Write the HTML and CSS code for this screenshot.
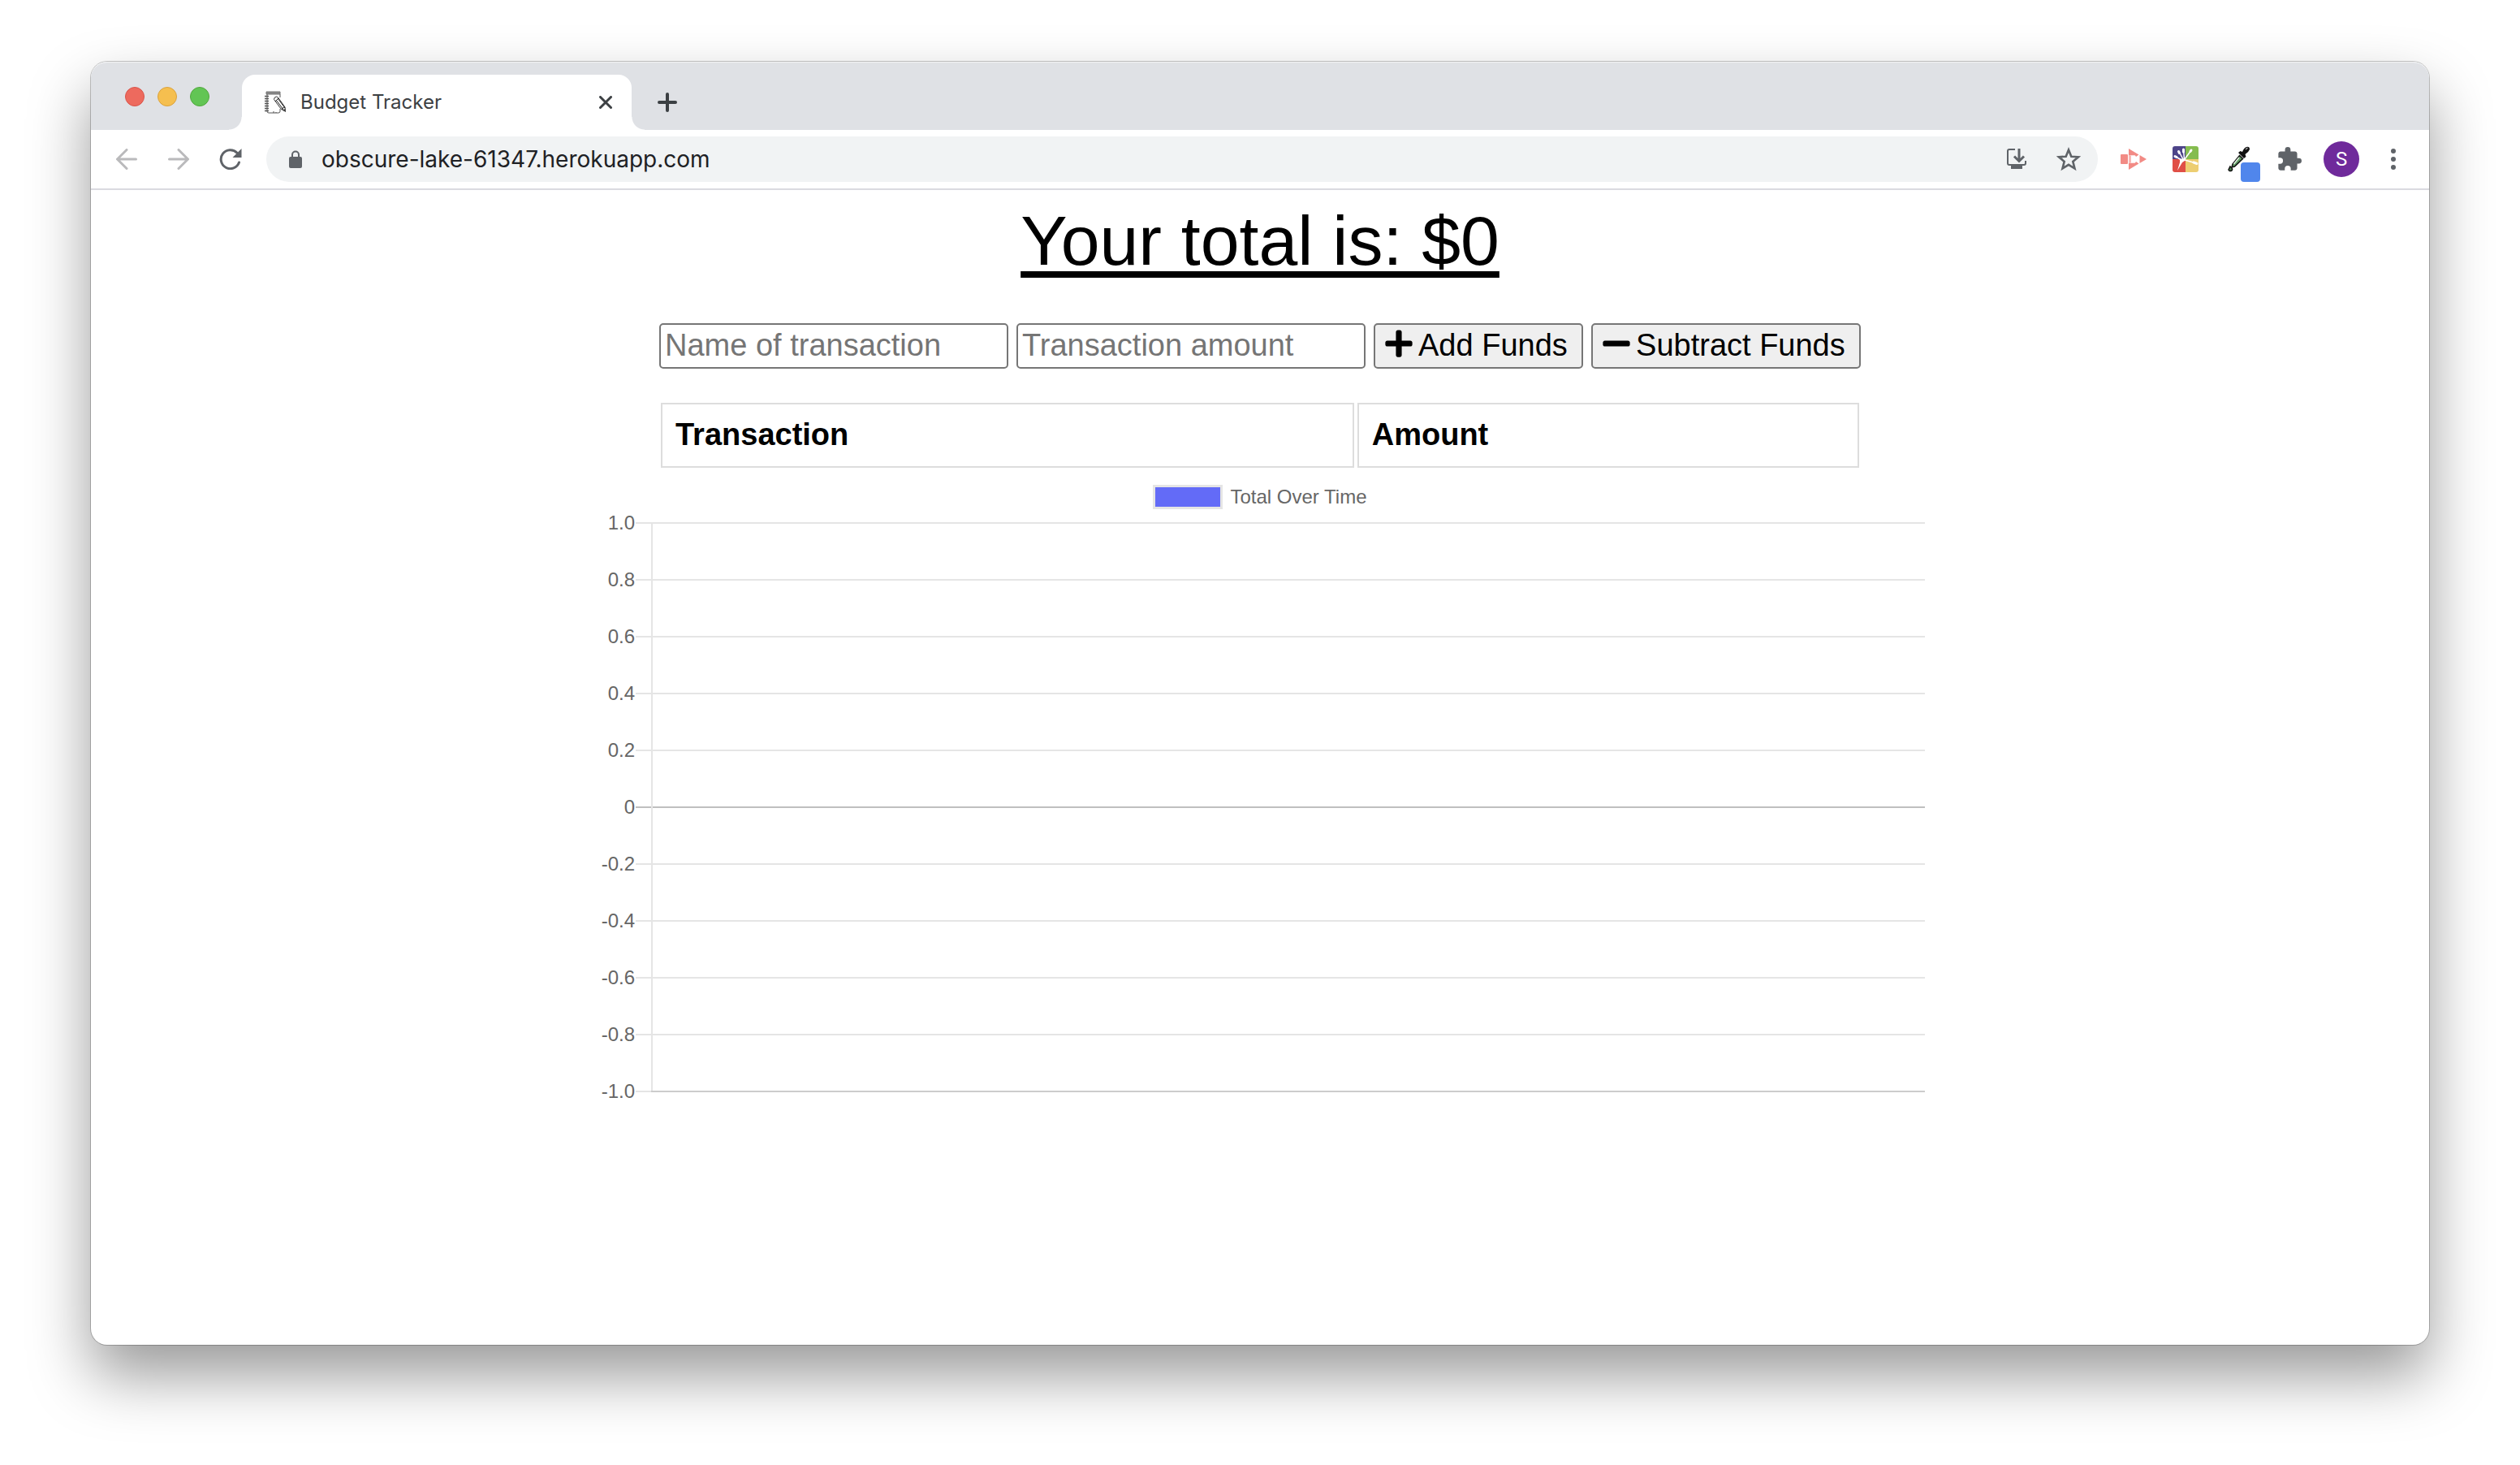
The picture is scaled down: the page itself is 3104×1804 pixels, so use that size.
FILE: index.html
```html
<!DOCTYPE html>
<html lang="en">
<head>
<meta charset="utf-8">
<title>Budget Tracker</title>
<link rel="stylesheet" href="styles.css">
</head>
<body>
<div class="window">
  <header class="tabstrip">
    <div class="lights">
      <span class="light light-close"></span>
      <span class="light light-min"></span>
      <span class="light light-max"></span>
    </div>
    <div class="tab">
      <svg class="favicon" width="26" height="28" viewBox="0 0 26 28" fill="none" stroke="#555" stroke-width="1">
        <path d="M2 1h17v3H2z" fill="#888" stroke="#777"/>
        <path d="M3 4v21q0 2 2 2h12q2 0 2-2v-3M19 4v4"/>
        <path d="M0 6.500h5M0 9.500h5M0 12.500h5M0 15.500h5M0 18.500h5M0 21.500h5M0 24.500h5" stroke-width="1.500"/>
        <path d="M11.500 10.500q0-3 3-3.500l2 1L25 20l.5 5-5-2.500z" fill="#fff" stroke="#333"/>
        <path d="M13 13l4-4M14 11l9 12M16 9l9 12M20.500 22.500l4-3" stroke="#222"/>
        <path d="M23 24l3 1.500-.5-3.500z" fill="#222"/>
        <path d="M11 27v-2M14 27v-1"/>
      </svg>
      <span class="tab-title">Budget Tracker</span>
      <button class="tab-close" type="button" aria-label="Close tab">
        <svg width="16" height="16" viewBox="0 0 16 16" stroke="#3c4043" stroke-width="3" stroke-linecap="round"><path d="M1.500 1.500l13 13M14.500 1.500l-13 13"/></svg>
      </button>
    </div>
    <button class="new-tab" type="button" aria-label="New tab">
      <svg width="24" height="24" viewBox="0 0 24 24" stroke="#3c4043" stroke-width="4" stroke-linecap="round"><path d="M12 2v20M2 12h20"/></svg>
    </button>
  </header>

  <nav class="toolbar">
    <button class="tool" type="button" aria-label="Back">
      <svg width="26" height="26" viewBox="0 0 26 26" fill="none" stroke="#bababc" stroke-width="3" stroke-linecap="round" stroke-linejoin="round"><path d="M24.500 13H2M13 1.500L1.500 13 13 24.500"/></svg>
    </button>
    <button class="tool" type="button" aria-label="Forward">
      <svg width="26" height="26" viewBox="0 0 26 26" fill="none" stroke="#bababc" stroke-width="3" stroke-linecap="round" stroke-linejoin="round"><path d="M1.500 13H24M13 1.500L24.500 13 13 24.500"/></svg>
    </button>
    <button class="tool" type="button" aria-label="Reload">
      <svg width="28" height="26" viewBox="0 0 28 26" fill="none" stroke="#5f6368" stroke-width="3"><path d="M24.500 17A11.500 11.500 0 1 1 22 5.200" stroke-linecap="round"/><path d="M27.500 0v11h-11z" fill="#5f6368" stroke="none"/></svg>
    </button>
    <div class="omnibox">
      <svg class="lock" width="16" height="22" viewBox="0 0 16 22"><rect x="0" y="8" width="16" height="14" rx="2" fill="#5f6368"/><path d="M4 9V5.500a4 4 0 0 1 8 0V9" fill="none" stroke="#5f6368" stroke-width="2"/></svg>
      <input class="url" type="text" aria-label="Address" value="obscure-lake-61347.herokuapp.com">
      <button class="tool" type="button" aria-label="Install app">
        <svg width="26" height="28" viewBox="0 0 26 28" fill="none" stroke="#5f6368" stroke-width="2"><path d="M11 2H4q-2 0-2 2v15q0 2 2 2h18q2 0 2-2v-3"/><path d="M6 22h14v4H6z" fill="#5f6368" stroke="none"/><path d="M16 1v15M10 10.500l6 6 6-6" stroke-width="3"/></svg>
      </button>
      <button class="tool" type="button" aria-label="Bookmark">
        <svg width="30" height="30" viewBox="0 0 30 30"><path d="M15 3.500l3.300 8.200 8.700.6-6.700 5.600 2.200 8.600L15 21.800l-7.500 4.700 2.200-8.600L3 12.300l8.700-.6z" fill="none" stroke="#5f6368" stroke-width="2.600"/></svg>
      </button>
    </div>
    <button class="tool" type="button" aria-label="Screen recorder">
      <svg width="32" height="26" viewBox="0 0 32 26" fill="#f28b85"><rect x="0" y="7" width="9" height="12" rx="1"/><path d="M10 0l12.500 7.500-3.500 2.500-1-1.500h-8z"/><path d="M10 26l12.500-7.500-3.500-2.500-1 1.500h-8z"/><path d="M10 7h1v12h-1z"/><path d="M32 13l-8.500-5v10z"/><path d="M10 8.500h7.500L19 11l-1.500 1v2l1.500 1-1.500 2.500H10z" fill="#fff"/><path d="M10 8.500h3v9h-3z" fill="#f28b85" opacity=".6"/></svg>
    </button>
    <button class="tool" type="button" aria-label="Colour burst">
      <svg width="32" height="32" viewBox="0 0 32 32"><path d="M16 0v16H0V3q0-3 3-3z" fill="#4d4489"/><path d="M16 0h13q3 0 3 3v13H16z" fill="#85bc4f"/><path d="M0 16h16v16H3q-3 0-3-3z" fill="#e04f46"/><path d="M16 16h16v13q0 3-3 3H16z" fill="#edce72"/><g stroke="#fff" stroke-linecap="round" fill="none" stroke-width="1.500"><path d="M14.500 16l-1-12M13 16L8 7M11 17l-7-4M15 16l8-11M15 17l14 4"/><path d="M13.500 4v3M22 6.500L23 5M26 20l4 1.500M7.500 6.500l1 2M3 12.500l2 1" stroke-width="3"/></g><path d="M9 15.500h7l-1 2.500-3 2-6 10 3-10z" fill="#fff"/></svg>
    </button>
    <button class="tool" type="button" aria-label="Colour picker">
      <svg class="dropper" width="40" height="44" viewBox="0 0 40 44"><path d="M14.500 11.500l4 4L8.500 25 5 26l1-4z" fill="#5f9a62" stroke="#111" stroke-width="1.500"/><path d="M14 14l-6.500 8" stroke="#dff0df" stroke-width="1.500"/><path d="M13 8l2.500-2 2.500 1q2-5 5-6 4-1 4 3-1 3-5.500 6l1 3-2.500 2z" fill="#111"/><path d="M22 4l2.500-2" stroke="#aaa" stroke-width="1.500"/><path d="M3 25q4 3 2 5-3 1.500-4-1z" fill="#4d8850" stroke="#111" stroke-width="1.500"/><rect x="16" y="20" width="24" height="24" rx="4" fill="#5086ec"/></svg>
    </button>
    <button class="tool" type="button" aria-label="Extensions">
      <svg width="30" height="30" viewBox="1 1 22 22" fill="#5f6368"><path d="M20.500 11H19V7c0-1.100-.9-2-2-2h-4V3.500a2.500 2.500 0 0 0-5 0V5H4c-1.100 0-2 .9-2 2v3.800h1.500a2.700 2.700 0 0 1 0 5.400H2V20c0 1.100.9 2 2 2h3.800v-1.500a2.700 2.700 0 0 1 5.400 0V22H17c1.100 0 2-.9 2-2v-4h1.500a2.500 2.500 0 0 0 0-5z"/></svg>
    </button>
    <button class="tool" type="button" aria-label="Profile"><span class="avatar">S</span></button>
    <button class="tool" type="button" aria-label="Menu">
      <svg width="6" height="26" viewBox="0 0 6 26" fill="#5f6368"><circle cx="3" cy="3" r="3"/><circle cx="3" cy="13" r="3"/><circle cx="3" cy="23" r="3"/></svg>
    </button>
  </nav>

  <main class="page">
    <h1 class="total">Your total is: $0</h1>
    <form class="entry">
      <input class="field" type="text" placeholder="Name of transaction" aria-label="Name of transaction">
      <input class="field" type="text" inputmode="decimal" placeholder="Transaction amount" aria-label="Transaction amount">
      <button class="action" type="button">
        <svg width="34" height="38" viewBox="0 0 448 512"><path d="M416 208H272V64c0-17.670-14.330-32-32-32h-32c-17.670 0-32 14.330-32 32v144H32c-17.670 0-32 14.330-32 32v32c0 17.670 14.330 32 32 32h144v144c0 17.670 14.330 32 32 32h32c17.670 0 32-14.330 32-32V304h144c17.670 0 32-14.330 32-32v-32c0-17.670-14.330-32-32-32z"/></svg>
        Add Funds
      </button>
      <button class="action" type="button">
        <svg width="34" height="38" viewBox="0 0 448 512"><path d="M416 208H32c-17.670 0-32 14.330-32 32v32c0 17.670 14.330 32 32 32h384c17.670 0 32-14.330 32-32v-32c0-17.670-14.330-32-32-32z"/></svg>
        Subtract Funds
      </button>
    </form>
    <table class="ledger">
      <thead>
        <tr><th class="col-name" scope="col">Transaction</th><th scope="col">Amount</th></tr>
      </thead>
    </table>
    <section class="chart" aria-label="Total Over Time">
      <div class="legend"><span class="swatch"></span>Total Over Time</div>
      <ul class="plot">
        <li class="tick"><span class="tick-label">1.0</span></li>
        <li class="tick"><span class="tick-label">0.8</span></li>
        <li class="tick"><span class="tick-label">0.6</span></li>
        <li class="tick"><span class="tick-label">0.4</span></li>
        <li class="tick"><span class="tick-label">0.2</span></li>
        <li class="tick tick-zero"><span class="tick-label">0</span></li>
        <li class="tick"><span class="tick-label">-0.2</span></li>
        <li class="tick"><span class="tick-label">-0.4</span></li>
        <li class="tick"><span class="tick-label">-0.6</span></li>
        <li class="tick"><span class="tick-label">-0.8</span></li>
        <li class="tick tick-base"><span class="tick-label">-1.0</span></li>
      </ul>
    </section>
  </main>
</div>
</body>
</html>
```
FILE: styles.css
```css
* {
  box-sizing: border-box;
}

body {
  margin: 0;
  padding: 76px 112px 148px;
  background: #fff;
  color: #000;
  font-family: "Liberation Sans", Arial, sans-serif;
}

button {
  margin: 0;
  padding: 0;
  border: 0;
  background: none;
  color: inherit;
  font: inherit;
}

svg {
  display: block;
  flex: none;
}

.window {
  display: flex;
  flex-direction: column;
  min-height: calc(100vh - 224px);
  border-radius: 20px;
  background: #fff;
  box-shadow: 0 0 0 1px rgba(0, 0, 0, 0.22), 0 38px 76px rgba(0, 0, 0, 0.4);
}

/* Tab strip */
.tabstrip {
  display: flex;
  align-items: flex-end;
  height: 84px;
  padding-left: 42px;
  border-radius: 20px 20px 0 0;
  background: #dfe1e5;
  box-shadow: inset 0 2px 1px -1px #f4f5f6;
}

.lights {
  display: flex;
  align-self: center;
  gap: 16px;
  margin: 2px 40px 0 0;
}

.light {
  width: 24px;
  height: 24px;
  border: 1px solid #d9544a;
  border-radius: 50%;
  background: #ed6a5e;
}

.light-min {
  border-color: #dba23c;
  background: #f5bf4f;
}

.light-max {
  border-color: #51a83e;
  background: #62c554;
}

.tab {
  position: relative;
  display: flex;
  align-items: center;
  width: 480px;
  height: 68px;
  padding: 0 24px 0 28px;
  border-radius: 16px 16px 0 0;
  background: #fff;
}

.tab::before,
.tab::after {
  content: "";
  position: absolute;
  bottom: 0;
  width: 16px;
  height: 16px;
}

.tab::before {
  right: 100%;
  background: radial-gradient(circle at 0 0, transparent 15px, #fff 16px);
}

.tab::after {
  left: 100%;
  background: radial-gradient(circle at 100% 0, transparent 15px, #fff 16px);
}

.tab-title {
  flex: 1;
  margin-left: 18px;
  color: #3c4043;
  font: 24px/32px Inter, sans-serif;
}

.new-tab {
  align-items: center;
  height: 68px;
  margin-left: 32px;
}

.tab-close,
.new-tab {
  display: flex;
}

/* Toolbar */
.toolbar {
  display: flex;
  align-items: center;
  height: 74px;
  padding: 0 12px;
  border-bottom: 2px solid #dadae0;
}

.tool {
  display: flex;
  align-items: center;
  justify-content: center;
  flex: none;
  width: 64px;
  height: 56px;
}

.omnibox {
  display: flex;
  align-items: center;
  flex: 1;
  height: 56px;
  margin: 0 12px;
  padding: 0 4px 0 28px;
  border-radius: 28px;
  background: #f1f3f4;
}

.url {
  flex: 1;
  min-width: 0;
  margin-left: 24px;
  padding: 0;
  border: 0;
  outline: 0;
  background: none;
  color: #202124;
  font: 28px/36px Inter, sans-serif;
}

.dropper {
  margin-top: 12px;
  margin-left: 16px;
}

.avatar {
  width: 44px;
  border-radius: 50%;
  background: #6f2a9b;
  color: #fff;
  font: 24px/44px Roboto, sans-serif;
}

/* Page */
.page {
  padding: 12px 0 40px;
}

.total {
  margin: 0 0 52px;
  font-size: 86px;
  font-weight: 400;
  line-height: 100px;
  text-align: center;
  text-decoration: underline;
  text-decoration-thickness: 8px;
  text-underline-offset: 8px;
}

.entry,
.ledger {
  width: 100%;
  max-width: 1484px;
  margin: 0 auto;
}

.entry {
  display: flex;
  gap: 10px;
  padding: 0 2px;
  font-size: 38px;
  line-height: 44px;
}

.field {
  flex: none;
  width: 430px;
  height: 56px;
  padding: 0 5px 2px;
  border: 2px solid #767676;
  border-radius: 5px;
  background: #fff;
  color: #000;
  font: inherit;
}

.field::placeholder {
  color: #757575;
  opacity: 1;
}

.action {
  display: flex;
  align-items: center;
  flex: 1 0 auto;
  gap: 7px;
  height: 56px;
  padding: 0 12px 2px;
  border: 2px solid #767676;
  border-radius: 5px;
  background: #efefef;
}

.action svg {
  margin-bottom: 4px;
}

.ledger {
  margin-top: 38px;
  border-spacing: 4px;
  table-layout: fixed;
  font-size: 38px;
  line-height: 44px;
  text-align: left;
}

.ledger th {
  padding: 15px 16px 17px;
  border: 2px solid #ddd;
}

.col-name {
  width: 58%;
}

/* Chart */
.chart {
  max-width: 1638px;
  margin: 17px auto 0;
  color: #666;
  font-size: 24px;
}

.legend {
  display: flex;
  align-items: center;
  justify-content: center;
  gap: 9px;
  height: 30px;
}

.swatch {
  width: 86px;
  height: 30px;
  border: 3px solid #e5e5e5;
  background: #636bf7;
}

.plot {
  position: relative;
  display: flex;
  flex-direction: column;
  gap: 68px;
  margin: 16px 0 0;
  padding: 0;
  list-style: none;
}

.plot::before {
  content: "";
  position: absolute;
  top: 0;
  bottom: 2px;
  left: 69px;
  width: 2px;
  background: #e5e5e5;
}

.tick {
  display: flex;
  align-items: center;
  height: 2px;
}

.tick-label {
  width: 49px;
  margin-right: 1px;
  text-align: right;
}

.tick::after {
  content: "";
  flex: 1;
  height: 2px;
  background: #e5e5e5;
}

.tick-zero::after {
  background: #bfbfbf;
}

.tick-base::after {
  background: linear-gradient(90deg, #e5e5e5 19px, #ccc 19px);
}
```
